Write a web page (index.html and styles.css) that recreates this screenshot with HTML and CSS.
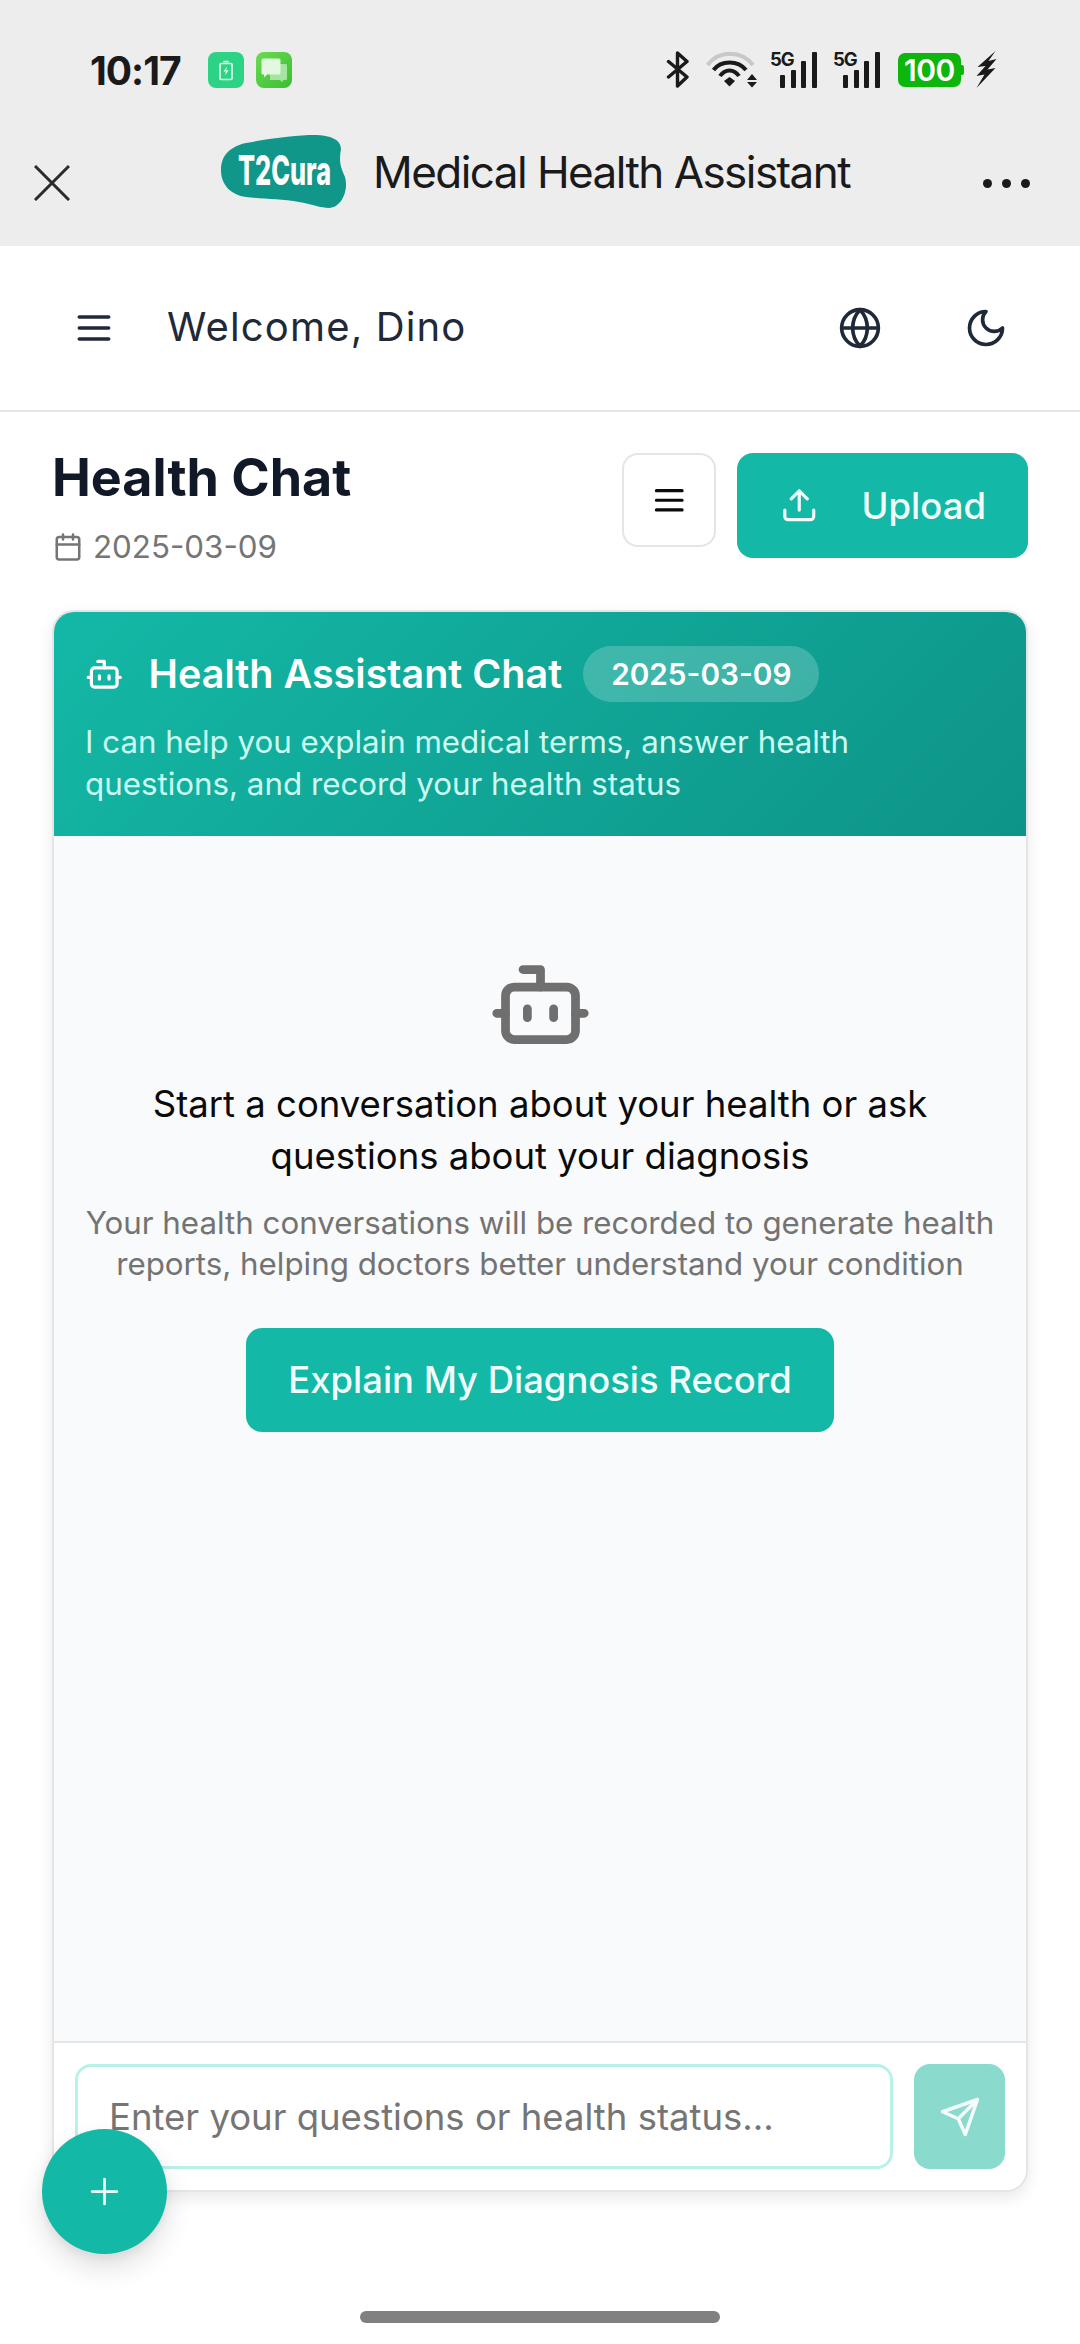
FILE: index.html
```html
<!DOCTYPE html>
<html lang="en">
<head>
  <meta charset="UTF-8">
  <meta name="viewport" content="width=device-width, initial-scale=1.0">
  <title>Health Chat</title>
  <link rel="stylesheet" href="styles.css">
</head>
<body>
  <!-- Phone status bar + mini program title -->
  <div class="top-shell">
    <div class="status-bar">
      <div class="status-left">
        <span class="clock">10:17</span>
        <svg class="app-badge" viewBox="0 0 36 36">
          <rect width="36" height="36" rx="8" fill="#2dd385"/>
          <path d="M15.500 9.500h5M13 11.500h10a1 1 0 0 1 1 1v14a1 1 0 0 1-1 1H13a1 1 0 0 1-1-1v-14a1 1 0 0 1 1-1Z" fill="none" stroke="#eafff4" stroke-width="1.600"/>
          <path d="M19 14.500l-3.500 5h2.500l-1 4 3.500-5.200h-2.500Z" fill="#eafff4"/>
        </svg>
        <svg class="app-badge" viewBox="0 0 36 36">
          <defs>
            <linearGradient id="chatGreen" x1="0" y1="0" x2="1" y2="1">
              <stop offset="0" stop-color="#68dc4e"/>
              <stop offset="1" stop-color="#3dbd35"/>
            </linearGradient>
          </defs>
          <rect width="36" height="36" rx="8" fill="url(#chatGreen)"/>
          <path d="M14 12h16a1.500 1.500 0 0 1 1 1.500v13a1.500 1.500 0 0 1-1.500 1.500h-2l-1.500 2-2-2H14Z" fill="#a4e5a0"/>
          <path d="M7 6.500h16a1.500 1.500 0 0 1 1.500 1.500v13a1.500 1.500 0 0 1-1.500 1.500H11l-3 3v-3H7A1.500 1.500 0 0 1 5.500 21V8A1.500 1.500 0 0 1 7 6.500Z" fill="#e3f8e0"/>
        </svg>
      </div>
      <div class="status-right">
        <svg class="st-bt" viewBox="0 0 24 37" fill="none" stroke="#1a1a1a" stroke-width="3.400" stroke-linejoin="round" stroke-linecap="round">
          <path d="M2.500 10.500 21 26l-9.500 9V2l9.500 8.500L2.500 26"/>
        </svg>
        <svg class="st-wifi" viewBox="0 0 52 37" fill="none">
          <path d="M1.500 14C13-1 35-1 47 14" stroke="#c8c8c8" stroke-width="4"/>
          <path d="M7.500 19C15 9 32 9 40 19" stroke="#1a1a1a" stroke-width="4"/>
          <path d="M14 25C19 17.500 28 17.500 33 25" stroke="#1a1a1a" stroke-width="4"/>
          <path d="M18 30l5.500-4 5.500 4-5.500 5.500Z" fill="#1a1a1a"/>
          <path d="M41 29l5-6 5 6ZM41 31l5 5.500 5-5.500Z" fill="#1a1a1a"/>
        </svg>
        <div class="st-signal">
          <span class="st-5g">5G</span>
          <i class="bar bar-1"></i><i class="bar bar-2"></i><i class="bar bar-3"></i><i class="bar bar-4"></i>
        </div>
        <div class="st-signal">
          <span class="st-5g">5G</span>
          <i class="bar bar-1"></i><i class="bar bar-2"></i><i class="bar bar-3"></i><i class="bar bar-4"></i>
        </div>
        <div class="st-battery">100</div>
        <svg class="st-bolt" viewBox="0 0 20 37"><path d="M19 0 1 16l8-1L0 25l8-1.500L0 37l19-20-8 1.500L20 8l-8 2Z" fill="#1a1a1a"/></svg>
      </div>
    </div>
    <div class="mini-bar">
      <svg class="mini-close" viewBox="0 0 36 36" fill="none" stroke="#2b2b2b" stroke-width="3"><path d="M1 1l34 34M35 1 1 35"/></svg>
      <div class="mini-title">
        <svg class="logo" viewBox="0 0 126 73">
          <path d="M0 35C0 18 12 11 25 8 50 3 78 0 93 0c17 0 27 5 27 14-2 12-1 17 4 28 4 14-4 31-16 31-8 0-18-4-30-6-18-3-38-3-53-5C10 60 0 50 0 35Z" fill="#10978a"/>
          <text class="logo-text" x="17" y="34.500" transform="scale(1 1.450)" textLength="93" lengthAdjust="spacingAndGlyphs">T2Cura</text>
        </svg>
        <span class="mini-name">Medical Health Assistant</span>
      </div>
      <div class="mini-dots"><i></i><i></i><i></i></div>
    </div>
  </div>

  <header class="app-header">
    <svg class="ico ico-menu" viewBox="0 0 24 24"><path d="M4 6h16M4 12h16M4 18h16"/></svg>
    <span class="welcome">Welcome, Dino</span>
    <svg class="ico ico-globe" viewBox="0 0 24 24"><circle cx="12" cy="12" r="10"/><path d="M12 2a14.500 14.500 0 0 0 0 20 14.500 14.500 0 0 0 0-20M2 12h20"/></svg>
    <svg class="ico ico-moon" viewBox="0 0 24 24"><path d="M12 3a6 6 0 0 0 9 9 9 9 0 1 1-9-9Z"/></svg>
  </header>

  <main class="page">
    <div class="page-head">
      <div class="page-title">
        <h1>Health Chat</h1>
        <div class="page-date">
          <svg class="ico ico-cal" viewBox="0 0 24 24"><path d="M8 2v4M16 2v4M3 10h18"/><rect x="3" y="4" width="18" height="18" rx="2"/></svg>
          <span>2025-03-09</span>
        </div>
      </div>
      <button class="btn-square">
        <svg class="ico ico-menu-sm" viewBox="0 0 24 24"><path d="M4 6h16M4 12h16M4 18h16"/></svg>
      </button>
      <button class="btn-upload">
        <svg class="ico ico-upload" viewBox="0 0 24 24"><path d="M21 15v4a2 2 0 0 1-2 2H5a2 2 0 0 1-2-2v-4M17 8l-5-5-5 5M12 3v12"/></svg>
        <span>Upload</span>
      </button>
    </div>

    <section class="chat-card">
      <div class="chat-head">
        <div class="chat-head-row">
          <svg class="ico ico-bot-sm" viewBox="0 0 24 24"><path d="M12 8V4H8M2 14h2M20 14h2M15 13v2M9 13v2"/><rect x="4" y="8" width="16" height="12" rx="2"/></svg>
          <h2>Health Assistant Chat</h2>
          <span class="date-pill">2025-03-09</span>
        </div>
        <p>I can help you explain medical terms, answer health questions, and record your health status</p>
      </div>

      <div class="chat-body">
        <svg class="ico ico-bot" viewBox="0 0 24 24"><path d="M12 8V4H8M2 14h2M20 14h2M15 13v2M9 13v2"/><rect x="4" y="8" width="16" height="12" rx="2"/></svg>
        <p class="empty-title">Start a conversation about your health or ask questions about your diagnosis</p>
        <p class="empty-note">Your health conversations will be recorded to generate health reports, helping doctors better understand your condition</p>
        <button class="btn-explain">Explain My Diagnosis Record</button>
      </div>

      <div class="chat-input">
        <input type="text" placeholder="Enter your questions or health status...">
        <button class="btn-send">
          <svg class="ico ico-send" viewBox="0 0 24 24"><path d="m22 2-7 20-4-9-9-4ZM22 2 11 13"/></svg>
        </button>
      </div>
    </section>
  </main>

  <button class="fab">
    <svg class="ico ico-plus" viewBox="0 0 24 24"><path d="M3 12h18M12 3v18"/></svg>
  </button>

  <div class="home-bar"></div>
</body>
</html>
```

FILE: styles.css
```css
/* Base */
* {
  box-sizing: border-box;
}

html, body {
  margin: 0;
  height: 2344px;
}

body {
  position: relative;
  display: flex;
  flex-direction: column;
  font-family: Inter, 'Noto Sans', sans-serif;
  background: #fff;
  overflow: hidden;
}

button {
  font-family: inherit;
  border: none;
  padding: 0;
}

h1, h2, p {
  margin: 0;
}

.ico {
  display: block;
  flex: none;
  fill: none;
  stroke: currentColor;
  stroke-width: 2;
  stroke-linecap: round;
  stroke-linejoin: round;
}

/* Status bar */
.top-shell {
  height: 246px;
  background: #ededed;
}

.status-bar {
  height: 104px;
  padding: 51px 83px 0 90px;
  display: flex;
  justify-content: space-between;
}

.status-left {
  display: flex;
  align-items: center;
  height: 38px;
}

.clock {
  width: 118px;
  font-size: 39px;
  font-weight: 700;
  letter-spacing: -1px;
  color: #1a1a1a;
}

.app-badge {
  width: 36px;
  height: 36px;
  margin-right: 12px;
}

.status-right {
  display: flex;
  align-items: center;
  height: 37px;
}

.st-bt {
  width: 24px;
  height: 37px;
  margin-right: 16px;
}

.st-wifi {
  width: 52px;
  height: 37px;
  margin-right: 12px;
}

.st-signal {
  position: relative;
  display: flex;
  align-items: flex-end;
  width: 48px;
  height: 37px;
  margin-right: 15px;
  padding-left: 10px;
  gap: 5.700px;
}

.st-signal + .st-battery {
  margin-left: 2px;
}

.st-5g {
  position: absolute;
  left: 0;
  top: -3px;
  font-size: 18.500px;
  font-weight: 700;
  letter-spacing: -1px;
  color: #1a1a1a;
}

.bar {
  display: block;
  width: 5px;
  background: #1a1a1a;
  border-radius: 1px;
}

.bar-1 { height: 13px; }
.bar-2 { height: 18px; }
.bar-3 { height: 27px; }
.bar-4 { height: 36px; }

.st-battery {
  position: relative;
  width: 63px;
  height: 34px;
  margin-right: 15px;
  background: #0db60d;
  border-radius: 7px;
  color: #fff;
  font-size: 30px;
  font-weight: 600;
  line-height: 34px;
  text-align: center;
  letter-spacing: -0.5px;
}

.st-battery::after {
  content: '';
  position: absolute;
  right: -3px;
  top: 12px;
  width: 3px;
  height: 10px;
  background: #0db60d;
  border-radius: 0 2px 2px 0;
}

.st-bolt {
  width: 21px;
  height: 37px;
}

/* Mini program bar */
.mini-bar {
  height: 142px;
  padding: 31px 50px 0 34px;
  display: flex;
}

.mini-close {
  width: 36px;
  height: 36px;
  margin-top: 30px;
}

.mini-title {
  flex: 1;
  display: flex;
  align-items: center;
  height: 73px;
  padding-left: 151px;
}

.logo {
  width: 126px;
  height: 73px;
  margin-right: 26px;
}

.logo-text {
  font-family: Inter, sans-serif;
  font-size: 28px;
  font-weight: 800;
  fill: #fff;
}

.mini-name {
  font-size: 44px;
  letter-spacing: -1.550px;
  color: #1a1a1a;
}

.mini-dots {
  display: flex;
  gap: 10px;
  margin-top: 44px;
  height: 9px;
}

.mini-dots i {
  display: block;
  width: 9px;
  height: 9px;
  background: #1a1a1a;
  border-radius: 50%;
}

/* App header */
.app-header {
  height: 166px;
  padding: 0 72px 0 72px;
  display: flex;
  align-items: center;
  border-bottom: 2px solid #e5e5e5;
  color: #1f2937;
}

.ico-menu {
  width: 44px;
  height: 44px;
}

.welcome {
  flex: 1;
  margin-left: 51px;
  margin-bottom: 3px;
  font-size: 40px;
  letter-spacing: 1.150px;
  color: #1f2937;
}

.ico-globe {
  width: 44px;
  height: 44px;
  margin-right: 82px;
}

.ico-moon {
  width: 44px;
  height: 44px;
}

/* Page */
.page {
  flex: 1;
  padding: 41px 52px 0;
}

.page-head {
  display: flex;
  align-items: flex-start;
  height: 105px;
  margin-bottom: 52px;
}

.page-title {
  flex: 1;
}

h1 {
  font-size: 52px;
  font-weight: 700;
  line-height: 66px;
  margin-top: -8px;
  color: #111827;
}

.page-date {
  display: flex;
  align-items: center;
  gap: 10px;
  margin-top: 17px;
  padding-left: 1px;
  color: #757575;
  font-size: 31.300px;
}

.ico-cal {
  width: 30px;
  height: 30px;
}

.btn-square {
  width: 94px;
  height: 94px;
  margin-right: 21px;
  display: flex;
  align-items: center;
  justify-content: center;
  background: #fff;
  border: 2px solid #e5e5e5;
  border-radius: 16px;
  color: #0a0a0a;
}

.ico-menu-sm {
  width: 38.500px;
  height: 38.500px;
}

.btn-upload {
  width: 291px;
  height: 105px;
  display: flex;
  align-items: center;
  padding-left: 43px;
  gap: 43px;
  background: #14b8a6;
  border-radius: 16px;
  color: #f0fdfa;
  font-size: 36.500px;
  font-weight: 500;
}

.ico-upload {
  width: 38.500px;
  height: 38.500px;
}

/* Chat card */
.chat-card {
  display: flex;
  flex-direction: column;
  height: 1582px;
  background: #fff;
  border: 2px solid #e5e5e5;
  border-radius: 22px;
  box-shadow: 0 6px 16px rgba(0, 0, 0, 0.09);
  overflow: hidden;
}

.chat-head {
  height: 224px;
  padding: 34px 31px 0;
  background: linear-gradient(135deg, #14b8a6, #0d9488);
  color: #fff;
}

.chat-head-row {
  display: flex;
  align-items: center;
  height: 56px;
}

.ico-bot-sm {
  width: 38.500px;
  height: 38.500px;
  margin-right: 25px;
}

h2 {
  font-size: 39.500px;
  font-weight: 600;
  white-space: nowrap;
}

.date-pill {
  margin-left: 21px;
  padding: 0 28px;
  height: 56px;
  line-height: 56px;
  background: rgba(255, 255, 255, 0.2);
  border-radius: 28px;
  font-size: 29.750px;
  font-weight: 600;
}

.chat-head p {
  margin-top: 19px;
  font-size: 31.300px;
  line-height: 42px;
  color: #ccfbf1;
}

.chat-body {
  flex: 1;
  display: flex;
  flex-direction: column;
  align-items: center;
  padding: 116px 30px 0;
  background: #f9fafb;
  text-align: center;
}

.ico-bot {
  width: 105px;
  height: 105px;
  color: #6f6f6f;
}

.empty-title {
  margin-top: 21px;
  font-size: 36.500px;
  line-height: 52px;
  color: #0a0a0a;
}

.empty-note {
  margin-top: 21px;
  font-size: 31.300px;
  line-height: 41px;
  color: #737373;
}

.btn-explain {
  margin-top: 43px;
  width: 588px;
  height: 104px;
  background: #14b8a6;
  border-radius: 16px;
  color: #f0fdfa;
  font-size: 36.400px;
  font-weight: 500;
}

.chat-input {
  display: flex;
  gap: 21px;
  height: 149px;
  padding: 21px 21px 0 21px;
  background: #fff;
  border-top: 2px solid #e5e5e5;
}

.chat-input input {
  flex: 1;
  min-width: 0;
  height: 105px;
  padding: 0 31px;
  font-family: inherit;
  font-size: 36.500px;
  color: #0a0a0a;
  background: #fff;
  border: 3px solid #b8f1e8;
  border-radius: 16px;
  outline: none;
}

.chat-input input::placeholder {
  color: #757575;
  opacity: 1;
}

.btn-send {
  width: 91px;
  height: 105px;
  display: flex;
  align-items: center;
  justify-content: center;
  background: #8bdace;
  border-radius: 16px;
  color: #f4fdfb;
}

.ico-send {
  width: 42px;
  height: 42px;
}

/* Floating add button */
.fab {
  position: absolute;
  left: 42px;
  top: 2129px;
  width: 125px;
  height: 125px;
  display: flex;
  align-items: center;
  justify-content: center;
  background: #14b8a6;
  border-radius: 50%;
  box-shadow: 0 14px 28px rgba(0, 0, 0, 0.12), 0 4px 10px rgba(0, 0, 0, 0.06);
  color: #f0fdfa;
}

.ico-plus {
  width: 33px;
  height: 33px;
}

.home-bar {
  position: absolute;
  left: 360px;
  top: 2311px;
  width: 360px;
  height: 12px;
  background: #808080;
  border-radius: 6px;
}
```
